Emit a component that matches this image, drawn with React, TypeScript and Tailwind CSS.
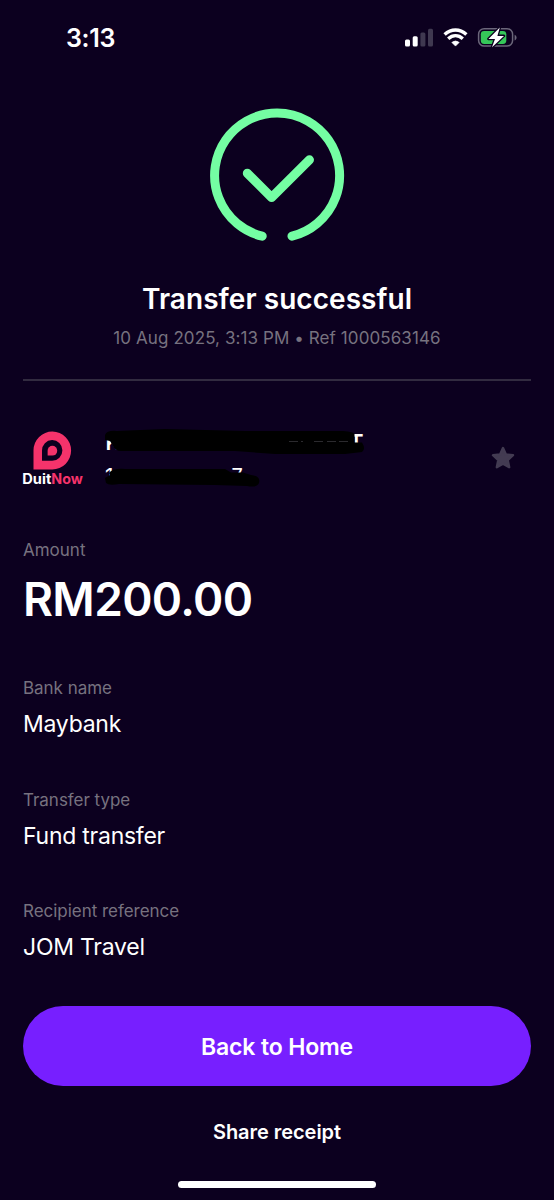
function StatusBar() {
  return (
    <div className="flex h-[74px] items-center justify-between pt-[1px] pr-[37px] pl-[66px]">
      <span className="pt-px text-[25px] leading-none font-semibold tracking-[-0.3px]">3:13</span>
      <svg width="112" height="24" viewBox="0 0 112 24" fill="none">
        {/* signal */}
        <rect x="0" y="13.5" width="5" height="7" rx="1.5" fill="#fff" />
        <rect x="7.7" y="10.2" width="5" height="10.3" rx="1.5" fill="#fff" />
        <rect x="15.4" y="6.5" width="5" height="14" rx="1.5" fill="#3f3850" />
        <rect x="23" y="2.7" width="5" height="17.8" rx="1.5" fill="#3f3850" />
        {/* wifi */}
        <g stroke="#fff" strokeWidth="3.4">
          <path d="M39.6 8.5C46.2 2.4 54.8 2.4 61.4 8.5" />
          <path d="M43.2 12.8C47.6 8.8 53.4 8.8 57.8 12.8" />
        </g>
        <path d="M46.8 16.4Q50.5 13.5 54.2 16.4L50.5 20.1Z" fill="#fff" stroke="#fff" strokeWidth="0.6" strokeLinejoin="round" />
        {/* battery */}
        <rect x="73.6" y="2.7" width="34" height="17.4" rx="5.6" stroke="#6b667a" strokeWidth="1.5" />
        <path d="M109.6 8.7c2.6 1 2.6 4.8 0 5.8z" fill="#6b667a" />
        <rect x="75.8" y="4.9" width="25.5" height="13" rx="3.4" fill="#35c759" />
        <path d="M94.8 1.6L83.4 12.9h6.6l-3 8.4L99 9.9h-6.6z" fill="#fff" stroke="#0c001f" strokeWidth="2.6" strokeLinejoin="round" paintOrder="stroke" />
      </svg>
    </div>
  );
}

function SuccessIcon() {
  return (
    <svg className="mx-auto block" width="140" height="140" viewBox="0 0 140 140" fill="none" stroke="#74fea3" strokeWidth="9" strokeLinecap="round" strokeLinejoin="round">
      <path d="M55.2 131.2A62.5 62.5 0 1 1 85 131.2" />
      <path d="M40.3 68.3L64.6 92.5L102.5 54.8" />
    </svg>
  );
}

function DuitNowLogo() {
  return (
    <svg className="-ml-px shrink-0" width="62" height="58" viewBox="0 0 62 58">
      <path d="M11.5 38.5V19.3A18.8 19 0 1 1 30.3 38.5Z" fill="#f5336b" />
      <path d="M20 29.8V19.6A10.2 10.4 0 1 1 30.2 29.8Z" fill="#0c001f" />
      <path d="M25.6 24.6V19.7A4.8 4.9 0 1 1 30.4 24.6Z" fill="#f5336b" />
      <g fontFamily="Inter, sans-serif" fontSize="14.2" fontWeight="700">
        <text x="0.3" y="53.2" fill="#fff" textLength="29" lengthAdjust="spacingAndGlyphs">Duit</text>
        <text x="29.3" y="53.2" fill="#f5336b" textLength="31.5" lengthAdjust="spacingAndGlyphs">Now</text>
      </g>
    </svg>
  );
}

// name and account number with marker strokes over them
function MaskedRecipient() {
  return (
    <svg className="ml-[21px] shrink-0" width="262" height="66" viewBox="0 0 262 66">
      <g fill="#fff" fontFamily="Inter, sans-serif">
        <text x="0.5" y="22.5" fontSize="21" fontWeight="600">K</text>
        <text x="244" y="22.5" fontSize="22" fontWeight="600">T</text>
        <text x="0" y="57" fontSize="21">1</text>
        <text x="126.5" y="56" fontSize="20">7</text>
      </g>
      <g fill="#000">
        <path d="M0 8Q2 3 12 4L60 2L140 4L238 4Q249 5 249.5 7V15.5H257Q261 22 257 25L240 27H170L130 24L16 24Q10 24 8 19L5 14L0 13Z" />
        <path d="M4 46Q8 41 20 42H120L126 45.5H138L146 48Q156 49 154 56Q152 61 142 59L110 58L14 57Q4 59 1 56L0 51L5 48Z" />
      </g>
      <path d="M184 14.5h14M209 14.5h9M222 14.5h22" stroke="#2b2a2e" strokeWidth="1" strokeDasharray="9 3" />
    </svg>
  );
}

const details = [
  { label: 'Bank name', value: 'Maybank' },
  { label: 'Transfer type', value: 'Fund transfer' },
  { label: 'Recipient reference', value: 'JOM Travel' },
];

export default function App() {
  return (
    <div className="flex h-[1200px] w-[554px] flex-col overflow-hidden bg-[#0c001f] font-['Inter',sans-serif] text-white">
      <StatusBar />

      <main className="flex flex-1 flex-col px-[23px]">
        <div className="pt-[31px] text-center">
          <SuccessIcon />
          <h1 className="mt-[36px] text-[28px] leading-[36px] font-semibold tracking-[0.05px]">Transfer successful</h1>
          <p className="mt-[9px] text-[17px] leading-[24px] tracking-[0.09px] text-[#77727f]">10 Aug 2025, 3:13 PM • Ref 1000563146</p>
        </div>
        <hr className="mt-[29px] border-t-2 border-[#322b40]" />

        <div className="mt-[46px] flex h-[66px] items-start">
          <div className="pt-[4px]"><DuitNowLogo /></div>
          <MaskedRecipient />
          <svg className="mt-[18px] mr-[15px] ml-auto" width="26" height="26" viewBox="0 0 26 26">
            <path d="M13 3L15.9 9.5L23 10.2L17.7 15L19.2 22.2L13 18.6L6.8 22.2L8.3 15L3 10.2L10.1 9.5Z" fill="#433b52" stroke="#433b52" strokeWidth="2.4" strokeLinejoin="round" />
          </svg>
        </div>

        <section className="mt-[45px]">
          <p className="text-[17px] leading-[24px] text-[#77727f]">Amount</p>
          <p className="mt-[9px] text-[46px] leading-[56px] font-semibold tracking-[-0.65px]">RM200.00</p>
        </section>

        <dl className="mt-[49.4px] flex flex-col gap-[47px]">
          {details.map(d => (
            <div key={d.label} className="h-[64.4px]">
              <dt className="text-[17px] leading-[24px] tracking-[-0.03px] text-[#77727f]">{d.label}</dt>
              <dd className="mt-[9px] text-[23px] leading-[30px] tracking-[-0.25px]">{d.value}</dd>
            </div>
          ))}
        </dl>
      </main>

      <footer className="flex flex-col items-center px-[23px] pb-[12px]">
        <button className="h-[80px] w-full rounded-full bg-[#771fff] pt-[2px] text-[23px] font-semibold tracking-[-0.15px]">Back to Home</button>
        <button className="mt-[31px] text-[20px] leading-[30px] font-semibold tracking-[-0.05px]">Share receipt</button>
        <div className="mt-[34px] h-[7px] w-[198px] rounded-full bg-white" />
      </footer>
    </div>
  );
}
